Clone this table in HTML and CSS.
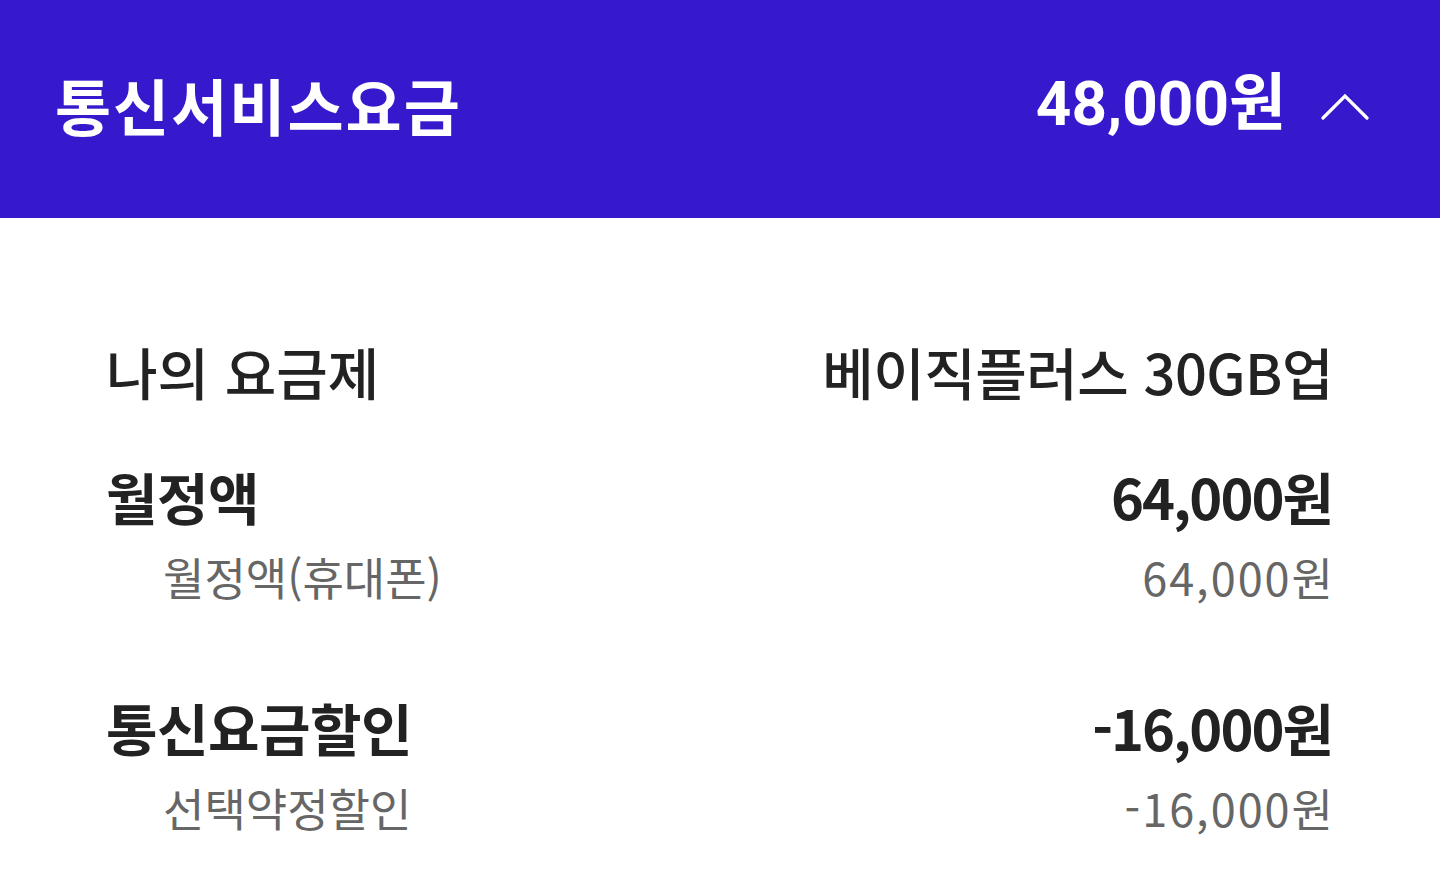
FILE: index.html
```html
<!DOCTYPE html>
<html lang="ko">
<head>
<meta charset="utf-8">
<title>통신서비스요금</title>
<link rel="stylesheet" href="styles.css">
</head>
<body>
<header class="bar">
  <h1 class="bar-title">통신서비스요금</h1>
  <div class="bar-right">
    <span class="bar-amount">48,000원</span>
    <svg class="chevron" width="48" height="28" viewBox="0 0 48 28" aria-hidden="true">
      <polyline points="2,25 24,3 46,25" fill="none" stroke="#fff" stroke-width="3.2" stroke-linecap="round" stroke-linejoin="miter"/>
    </svg>
  </div>
</header>
<main class="list">
  <div class="row plan">
    <span class="label">나의 요금제</span>
    <span class="value">베이직플러스 30GB업</span>
  </div>
  <section class="group">
    <div class="row main">
      <span class="label">월정액</span>
      <span class="value">64,000원</span>
    </div>
    <div class="row sub">
      <span class="label">월정액(휴대폰)</span>
      <span class="value">64,000원</span>
    </div>
  </section>
  <section class="group">
    <div class="row main">
      <span class="label">통신요금할인</span>
      <span class="value">-16,000원</span>
    </div>
    <div class="row sub">
      <span class="label">선택약정할인</span>
      <span class="value">-16,000원</span>
    </div>
  </section>
</main>
</body>
</html>
```

FILE: styles.css
```css
html, body {
  margin: 0;
  padding: 0;
  background: #fff;
}
body {
  font-family: "Noto Sans CJK KR", "Noto Sans", sans-serif;
  color: #222;
}
.bar {
  height: 218px;
  background: #3619cc;
  display: flex;
  align-items: center;
  justify-content: space-between;
  padding: 0 71px 10px 55px;
  box-sizing: border-box;
  color: #fff;
}
.bar-title {
  margin: 0;
  font-size: 61px;
  font-weight: 700;
  line-height: 1;
  letter-spacing: 2px;
}
.bar-right {
  display: flex;
  align-items: center;
  gap: 35px;
}
.bar-amount {
  font-family: Roboto, "Noto Sans CJK KR", sans-serif;
  font-size: 62px;
  font-weight: 700;
  line-height: 1;
  letter-spacing: 0;
}
.chevron {
  display: block;
  margin-top: 6px;
}
.list {
  padding: 120px 108px 0 106px;
}
.row {
  display: flex;
  justify-content: space-between;
  align-items: center;
}
.plan {
  height: 64px;
  font-size: 56px;
  font-weight: 500;
}
.plan .value {
  letter-spacing: -0.5px;
  margin-right: -1px;
}
.group {
  margin-top: 61px;
}
.group + .group {
  margin-top: 90px;
}
.main {
  height: 64px;
  font-size: 56px;
  font-weight: 700;
}
.main .label {
  letter-spacing: -0.5px;
}
.main .value {
  letter-spacing: -2px;
}
.sub {
  margin-top: 21px;
  height: 56px;
  font-size: 45px;
  font-weight: 400;
  color: #666;
}
.sub .label {
  padding-left: 57px;
}
.sub .value {
  letter-spacing: 2px;
  margin-right: -3px;
}
```
